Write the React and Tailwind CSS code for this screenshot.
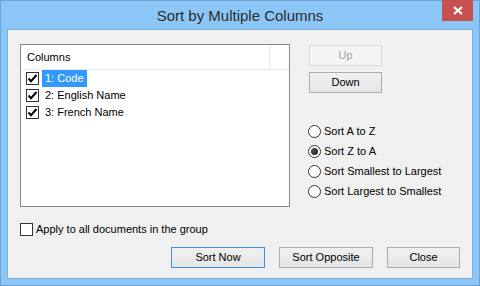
import React, { useState } from 'react';

function CheckBox({ checked }) {
  return (
    <span className="w-[13px] h-[13px] shrink-0 border border-[#333333] bg-white flex items-center justify-center">
      {checked && (
        <svg width="11" height="11" viewBox="0 0 11 11">
          <path d="M1.5 5.5 L4 8.2 L9.5 2" fill="none" stroke="#000" strokeWidth="2" />
        </svg>
      )}
    </span>
  );
}

function Radio({ checked, label, onClick }) {
  return (
    <div className="h-[20px] flex items-center cursor-default" onClick={onClick}>
      <span className="w-[13px] h-[13px] rounded-full border border-[#333333] bg-white flex items-center justify-center">
        {checked && <span className="w-[7px] h-[7px] rounded-full bg-[radial-gradient(circle_at_35%_35%,#555,#111)]"></span>}
      </span>
      <span className="ml-[3px]">{label}</span>
    </div>
  );
}

function Btn({ children, className = '', disabled, isDefault }) {
  return (
    <button
      className={
        'h-[21px] flex items-center justify-center border ' +
        (disabled
          ? 'border-[#d9d9d9] bg-[#f4f4f4] text-[#a0a0a0] '
          : isDefault
          ? 'border-[#3c8fe6] bg-gradient-to-b from-[#f0f0f0] to-[#e5e5e5] text-black '
          : 'border-[#acacac] bg-gradient-to-b from-[#f0f0f0] to-[#e5e5e5] text-black ') +
        className
      }
    >
      {children}
    </button>
  );
}

export default function App() {
  const [order, setOrder] = useState(1);
  const columns = ['1: Code', '2: English Name', '3: French Name'];
  const options = ['Sort A to Z', 'Sort Z to A', 'Sort Smallest to Largest', 'Sort Largest to Smallest'];

  return (
    <div className="w-[480px] h-[286px] bg-[#8cc6f7] border border-[#6aa3d8] flex flex-col font-['Liberation_Sans',Arial,sans-serif] text-[11px] text-black select-none">
      {/* title bar */}
      <div className="h-[28px] relative flex items-center justify-center">
        <span className="text-[15px] text-[#2b2b2b] pt-[2px]">Sort by Multiple Columns</span>
        <div className="absolute right-[6px] top-[-1px] w-[31px] h-[21px] bg-[#c75050] flex items-center justify-center">
          <svg width="10" height="9" viewBox="0 0 10 9">
            <path d="M1 1 L9 8 M9 1 L1 8" stroke="#fff" strokeWidth="2.2" />
          </svg>
        </div>
      </div>

      {/* client */}
      <div className="mx-[6px] h-[250px] border border-[#7ab1e3] bg-[#f0f0f0] flex flex-col pl-[12px] pr-[12px] pt-[14px]">
        <div className="flex">
          <div className="w-[270px] h-[163px] border border-[#828790] bg-white flex flex-col">
            <div className="h-[25px] flex border-b border-[#e6ecf4]">
              <div className="w-[249px] border-r border-[#e6ecf4] pl-[6px] flex items-center">Columns</div>
            </div>
            {columns.map((c, i) => (
              <div key={c} className="h-[17px] flex items-center pl-[5px]">
                <CheckBox checked />
                <span className={'ml-[3px] h-[17px] px-[3px] flex items-center ' + (i === 0 ? 'bg-[#3399ff] text-white' : '')}>{c}</span>
              </div>
            ))}
          </div>

          <div className="ml-[19px] flex flex-col">
            <Btn disabled className="w-[73px] mt-px h-[20px]">Up</Btn>
            <Btn className="w-[73px] mt-[6px]">Down</Btn>
            <div className="mt-[28px] -ml-px flex flex-col">
              {options.map((o, i) => (
                <Radio key={o} label={o} checked={order === i} onClick={() => setOrder(i)} />
              ))}
            </div>
          </div>
        </div>

        <div className="mt-[16px] flex items-center h-[13px]">
          <CheckBox checked={false} />
          <span className="ml-[3px]">Apply to all documents in the group</span>
        </div>

        <div className="mt-[11px] flex justify-end gap-[14px]">
          <Btn isDefault className="w-[94px] h-[20px]">Sort Now</Btn>
          <Btn className="w-[94px] h-[20px]">Sort Opposite</Btn>
          <Btn className="w-[73px] h-[20px]">Close</Btn>
        </div>
      </div>
    </div>
  );
}
